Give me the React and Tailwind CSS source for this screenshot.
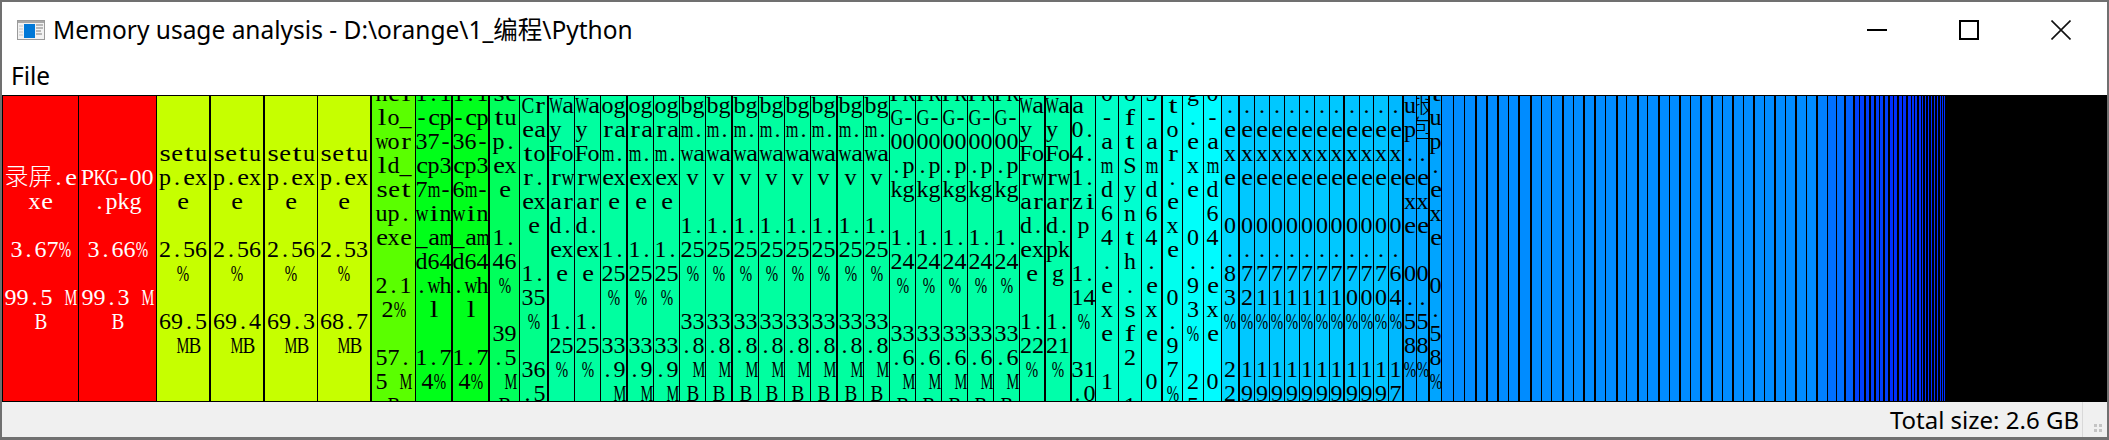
import { Fragment } from 'react'

const serif = "font-['Liberation_Serif','Noto_Sans_CJK_SC',serif]"
const ui = "font-['Noto_Sans','Noto_Sans_CJK_SC',sans-serif]"

// the original font is monospaced, so wide glyphs get squeezed and narrow ones stretched into the half-width cell
const fit = {
  M: 'scale-x-[0.6]', W: 'scale-x-[0.6]', '%': 'scale-x-[0.62]', m: 'scale-x-[0.68]',
  w: 'scale-x-[0.75]', G: 'scale-x-[0.75]', K: 'scale-x-[0.75]', B: 'scale-x-[0.8]', C: 'scale-x-[0.8]',
  s: 'scale-x-[1.2]', t: 'scale-x-[1.35]', e: 'scale-x-[1.1]', r: 'scale-x-[1.2]', f: 'scale-x-[1.3]',
  i: 'scale-x-[1.3]', l: 'scale-x-[1.3]', a: 'scale-x-[1.1]', c: 'scale-x-[1.1]',
}

// each row: [left edge, right edge incl. divider, divider px, colour, name, percent, size]
const files = [
  [3, 79, 1, '#ff0000', '录屏.exe', '3.67%', '99.5 MB'],
  [79, 157, 1, '#ff0000', 'PKG-00.pkg', '3.66%', '99.3 MB'],
  [157, 211, 2, '#c6ff00', 'setup.exe', '2.56%', '69.5 MB'],
  [211, 265, 2, '#c6ff00', 'setup.exe', '2.56%', '69.4 MB'],
  [265, 318, 1, '#c6ff00', 'setup.exe', '2.56%', '69.3 MB'],
  [318, 372, 2, '#c6ff00', 'setup.exe', '2.53%', '68.7 MB'],
  [372, 416, 1, '#5aff00', 'hello_world_setup.exe', '2.12%', '57.5 MB'],
  [416, 453, 2, '#00ff19', 'PyQt5-5.11.1-cp37-cp37m-win_amd64.whl', '1.74%', '47.2 MB'],
  [453, 490, 2, '#00ff1c', 'PyQt5-5.11.1-cp36-cp36m-win_amd64.whl', '1.74%', '47.1 MB'],
  [490, 520, 1, '#00ff5c', 'setup.exe', '1.46%', '39.5 MB'],
  [520, 549, 2, '#00ff8a', 'Vue_Creator.exe', '1.35%', '36.5 MB'],
  [549, 575, 1, '#00ffa0', 'On_Your_Way Forward.exe', '1.25%', '33.9 MB'],
  [575, 601, 1, '#00ffa0', 'On_Your_Way Forward.exe', '1.25%', '33.9 MB'],
  [601, 628, 2, '#00ffa0', 'program.exe', '1.25%', '33.9 MB'],
  [628, 654, 1, '#00ffa0', 'program.exe', '1.25%', '33.9 MB'],
  [654, 680, 1, '#00ffa0', 'program.exe', '1.25%', '33.9 MB'],
  [680, 706, 1, '#00ffa0', 'bgm.wav', '1.25%', '33.8 MB'],
  [706, 733, 2, '#00ffa0', 'bgm.wav', '1.25%', '33.8 MB'],
  [733, 759, 1, '#00ffa0', 'bgm.wav', '1.25%', '33.8 MB'],
  [759, 785, 1, '#00ffa0', 'bgm.wav', '1.25%', '33.8 MB'],
  [785, 811, 1, '#00ffa0', 'bgm.wav', '1.25%', '33.8 MB'],
  [811, 838, 2, '#00ffa0', 'bgm.wav', '1.25%', '33.8 MB'],
  [838, 864, 1, '#00ffa0', 'bgm.wav', '1.25%', '33.8 MB'],
  [864, 890, 1, '#00ffa0', 'bgm.wav', '1.25%', '33.8 MB'],
  [890, 916, 1, '#00ffa4', 'PKG-00.pkg', '1.24%', '33.6 MB'],
  [916, 942, 1, '#00ffa4', 'PKG-00.pkg', '1.24%', '33.6 MB'],
  [942, 968, 1, '#00ffa4', 'PKG-00.pkg', '1.24%', '33.6 MB'],
  [968, 994, 1, '#00ffa4', 'PKG-00.pkg', '1.24%', '33.6 MB'],
  [994, 1020, 1, '#00ffa4', 'PKG-00.pkg', '1.24%', '33.6 MB'],
  [1020, 1046, 2, '#00ffa8', 'On_Your_Way Forward.exe', '1.22%', '33.1 MB'],
  [1046, 1072, 2, '#00ffaa', 'On_Your_Way Forward.pkg', '1.21%', '32.8 MB'],
  [1072, 1096, 1, '#00ffb8', 'Mocha 0.4.1.zip', '1.14%', '31.0 MB'],
  [1096, 1119, 1, '#00ffc8', 'python-3.8.0-amd64.exe', '1.09%', '28.9 MB'],
  [1119, 1142, 1, '#00ffd0', 'GeneralUserSoftSynth.sf2', '1.05%', '28.4 MB'],
  [1142, 1163, 2, '#00ffe0', 'python-3.7.5-amd64.exe', '0.98%', '26.6 MB'],
  [1163, 1183, 1, '#00ffee', 'Installator.exe', '0.97%', '26.3 MB'],
  [1183, 1204, 1, '#00fffa', 'ffmpeg.exe', '0.93%', '25.2 MB'],
  [1204, 1222, 1, '#00fbff', 'python-3.6.0-amd64.exe', '0.92%', '25.0 MB'],
  [1222, 1240, 2, '#00d8ff', 'setup.exe', '0.83%', '22.5 MB'],
  [1240, 1255, 1, '#00c8ff', 'setup.exe', '0.72%', '19.5 MB'],
  [1255, 1270, 1, '#00c8ff', 'setup.exe', '0.71%', '19.3 MB'],
  [1270, 1285, 1, '#00c8ff', 'setup.exe', '0.71%', '19.3 MB'],
  [1285, 1300, 1, '#00c8ff', 'setup.exe', '0.71%', '19.3 MB'],
  [1300, 1315, 1, '#00c8ff', 'setup.exe', '0.71%', '19.3 MB'],
  [1315, 1330, 1, '#00c8ff', 'setup.exe', '0.71%', '19.3 MB'],
  [1330, 1345, 2, '#00c8ff', 'setup.exe', '0.71%', '19.3 MB'],
  [1345, 1360, 1, '#00c4ff', 'setup.exe', '0.70%', '19.0 MB'],
  [1360, 1374, 1, '#00c4ff', 'setup.exe', '0.70%', '19.0 MB'],
  [1374, 1389, 1, '#00c4ff', 'setup.exe', '0.70%', '19.0 MB'],
  [1389, 1404, 2, '#00b8ff', 'setup.exe', '0.64%', '17.4 MB'],
  [1404, 1417, 1, '#00a4ff', 'app_setup.exe', '0.58%', '15.7 MB'],
  [1417, 1430, 2, '#00a4ff', 'wechat_报包.exe', '0.58%', '15.7 MB'],
  [1430, 1442, 1, '#00a4ff', 'test_setup.exe', '0.58%', '15.7 MB'],
  [1442, 1454, 1, '#008eff', '', '', ''],
]

// the unlabelled end of the treemap: [fill start, fill end]
const tail = [
  [1454, 1464], [1465, 1475], [1477, 1486], [1488, 1497], [1499, 1508], [1509, 1518], [1520, 1530], [1532, 1541],
  [1542, 1551], [1552, 1562], [1564, 1573], [1574, 1583], [1585, 1594], [1596, 1605], [1606, 1616], [1618, 1626],
  [1627, 1637], [1639, 1647], [1648, 1658], [1660, 1669], [1670, 1679], [1681, 1690], [1691, 1700], [1702, 1711],
  [1713, 1722], [1723, 1732], [1734, 1743], [1744, 1753], [1755, 1764], [1765, 1774], [1776, 1785], [1786, 1795],
  [1797, 1806], [1807, 1816], [1818, 1827], [1828, 1836], [1837, 1844], [1846, 1853], [1855, 1859], [1860, 1864],
  [1866, 1869], [1871, 1874], [1876, 1879], [1880, 1883], [1885, 1888], [1890, 1893], [1894, 1897], [1899, 1902],
  [1903, 1906], [1908, 1911], [1912, 1914], [1915, 1917], [1919, 1921], [1922, 1923], [1925, 1926], [1928, 1929],
  [1931, 1932], [1934, 1935], [1937, 1938], [1940, 1941], [1942, 1943], [1944, 1945],
]

function tailColor(x) {
  if (x < 1818) return '#008cff'
  if (x < 1828) return '#0080ff'
  if (x < 1846) return '#0070ff'
  if (x < 1855) return '#0060ff'
  if (x < 1890) return '#0040ff'
  return '#0030ff'
}

function isWide(ch) {
  return ch.charCodeAt(0) > 255
}

function wrap(text, cols) {
  const lines = []
  let line = ''
  let used = 0
  for (const ch of text) {
    const w = isWide(ch) ? 2 : 1
    if (used + w > cols && line) {
      lines.push(line)
      line = ''
      used = 0
    }
    line += ch
    used += w
  }
  if (line) lines.push(line)
  return lines
}

function Line({ text }) {
  return (
    <div className="flex h-6 justify-center whitespace-pre leading-6">
      {[...text].map((ch, i) => (
        <span key={i} className={`inline-flex justify-center ${isWide(ch) ? 'w-6 font-light' : 'w-3'} ${fit[ch] || ''}`}>
          {ch}
        </span>
      ))}
    </div>
  )
}

function Cell({ left, right, gap, color, name, pct, size }) {
  const width = right - left
  const cols = Math.max(1, Math.floor(width / 12))
  const blocks = [name, pct, size].filter(Boolean)
  return (
    <div
      className={`flex shrink-0 items-center justify-center overflow-hidden border-black ${gap === 2 ? 'border-r-2' : 'border-r'} ${color === '#ff0000' ? 'text-white' : 'text-black'}`}
      style={{ width, background: color }}
    >
      <div className="shrink-0">
        {blocks.map((b, i) => (
          <Fragment key={i}>
            {i > 0 && <div className="h-6" />}
            {wrap(b, cols).map((l, j) => (
              <Line key={j} text={l} />
            ))}
          </Fragment>
        ))}
      </div>
    </div>
  )
}

function AppIcon() {
  return (
    <svg width="28" height="20" viewBox="0 0 28 20" className="shrink-0">
      <rect x="0.5" y="0.5" width="27" height="19" fill="#f2f2f2" stroke="#9a9a9a" />
      <rect x="1" y="1" width="26" height="2" fill="#a8a8a8" />
      <rect x="7" y="4" width="11" height="14" fill="#0078d7" />
      <path d="M2 6h4M2 9h4M2 12h4M2 15h4" stroke="#c4c4c4" strokeWidth="1" />
      <path d="M19 5h7M19 8h7M19 11h5M19 14h6" stroke="#b8b8b8" strokeWidth="2" />
    </svg>
  )
}

export default function App() {
  return (
    <div className={`flex h-[440px] w-[2109px] flex-col overflow-hidden border-2 border-b-[3px] border-[#707070] bg-white text-black ${ui}`}>
      {/* Title bar */}
      <div className="flex h-[56px] shrink-0 items-center">
        <div className="ml-[15px] mr-2"><AppIcon /></div>
        <span className="text-[24.5px] leading-none">Memory usage analysis - D:\orange\1_编程\Python</span>
        <div className="ml-auto flex items-center">
          <div className="flex h-[56px] w-[92px] items-center justify-center">
            <div className="h-0.5 w-5 bg-black" />
          </div>
          <div className="flex h-[56px] w-[92px] items-center justify-center">
            <div className="h-5 w-5 border-2 border-black" />
          </div>
          <div className="flex h-[56px] w-[92px] items-center justify-center">
            <svg width="20" height="20" viewBox="0 0 20 20" fill="none" stroke="#111" strokeWidth="1.6">
              <path d="M0.5 0.5 19.5 19.5M19.5 0.5 0.5 19.5" />
            </svg>
          </div>
        </div>
      </div>

      {/* Menu */}
      <div className="flex h-[37px] shrink-0 items-center pl-[9px] text-[24.5px] leading-none">File</div>

      {/* Treemap */}
      <div className={`flex min-h-0 flex-1 overflow-hidden border-y border-l border-black bg-black text-[24px] ${serif}`}>
        {files.map(([left, right, gap, color, name, pct, size], i) => (
          <Cell key={i} left={left} right={right} gap={gap} color={color} name={name} pct={pct} size={size} />
        ))}
        {tail.map(([start, end], i) => (
          <div
            key={i}
            className="h-full shrink-0"
            style={{
              width: end - start,
              marginRight: i < tail.length - 1 ? tail[i + 1][0] - end : 0,
              background: tailColor(start),
            }}
          />
        ))}
      </div>

      {/* Status bar */}
      <div className="flex h-[35px] shrink-0 items-center justify-end bg-[#f0f0f0]">
        <span className="text-[24px] leading-none">Total size: 2.6 GB</span>
        <div className="ml-[3px] h-full w-px bg-[#d9d9d9]" />
        <div className="ml-[11px] mr-[5px] mt-[16px] grid grid-cols-2 gap-0.5">
          <div className="h-[3px] w-[3px] bg-[#c4c4c4]" />
          <div className="h-[3px] w-[3px] bg-[#c4c4c4]" />
          <div className="h-[3px] w-[3px] bg-[#c4c4c4]" />
          <div className="h-[3px] w-[3px] bg-[#c4c4c4]" />
        </div>
      </div>
    </div>
  )
}
